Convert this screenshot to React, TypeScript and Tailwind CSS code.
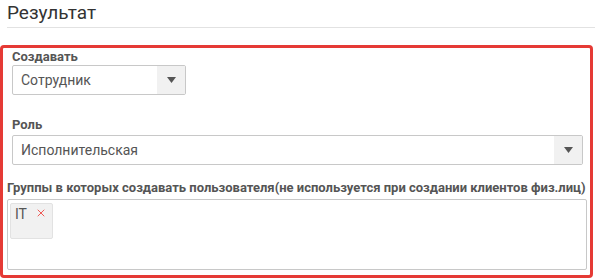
import { X } from "lucide-react";

const Caret = () => (
  <svg width="9" height="6" viewBox="0 0 9 6">
    <path d="M0 0 H9 L4.5 6 Z" fill="#555" />
  </svg>
);

const Select = ({ value, className }: { value: string; className: string }) => (
  <div
    className={`flex h-[30px] items-stretch rounded-[2px] border border-[#c8c8c8] bg-white ${className}`}
  >
    <span className="flex flex-1 items-center pl-[8px] text-[14px] text-[#555]">{value}</span>
    <span className="flex w-[28px] items-center justify-center bg-[#f1f1f1]">
      <Caret />
    </span>
  </div>
);

export default function App() {
  return (
    <div className="h-[280px] w-[595px] overflow-hidden bg-white font-['Roboto',sans-serif]">
      <div className="ml-[7px] border-b border-[#e2e2e2] pb-[3px] pt-[2px] text-[19px] leading-[22px] text-[#333]">
        Результат
      </div>

      <section className="mt-[17px] h-[233px] w-[593px] rounded-[4px] border-[3px] border-[#e53a35] px-[1px]">
        <div className="ml-[8px] mt-[1px] text-[13px] font-bold leading-[15px] text-[#555]">Создавать</div>
        <Select value="Сотрудник" className="ml-[8px] mt-[1px] w-[174px]" />

        <div className="ml-[8px] mt-[22px] text-[13px] font-bold leading-[15px] text-[#555]">Роль</div>
        <Select value="Исполнительская" className="ml-[8px] mt-[3px] w-[571px]" />

        <div className="ml-[3px] mt-[15px] whitespace-nowrap text-[13px] font-bold leading-[15px] text-[#555]">
          Группы в которых создавать пользователя(не используется при создании клиентов физ.лиц)
        </div>
        <div className="ml-[3px] mt-[4px] h-[71px] w-[580px] rounded-[2px] border border-[#c8c8c8] p-[2px]">
          <span className="inline-flex h-[36px] w-[43px] items-start gap-[8px] rounded-[2px] border border-[#e2e2e2] bg-[#f1f1f1] pl-[4px] pt-[3px]">
            <span className="text-[14px] leading-[15px] text-[#555]">IT</span>
            <X size={12} strokeWidth={2} className="text-[#ee5a55]" />
          </span>
        </div>
      </section>
    </div>
  );
}
